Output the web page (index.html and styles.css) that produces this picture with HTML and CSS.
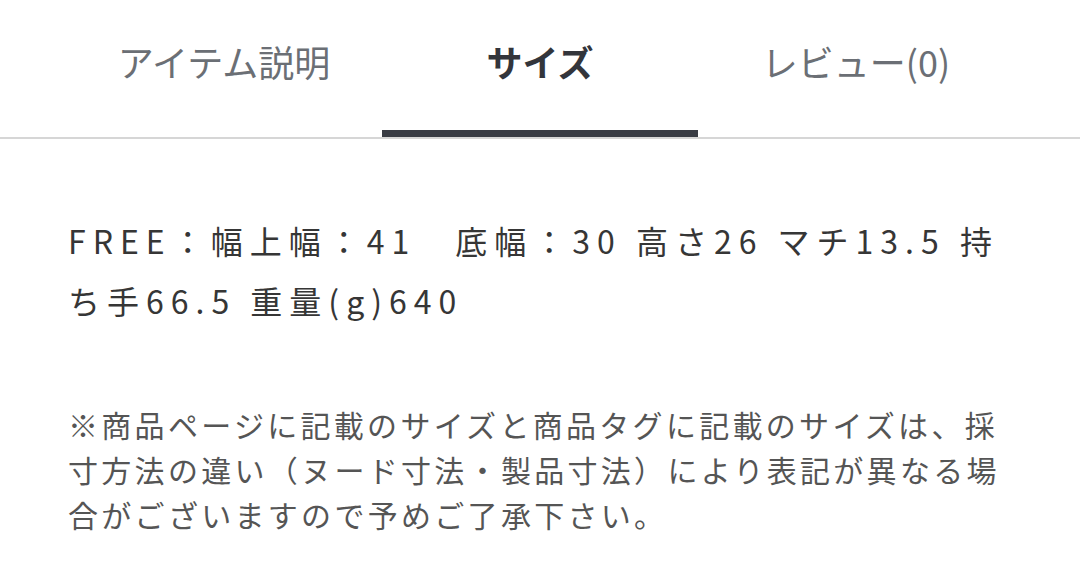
FILE: index.html
```html
<!DOCTYPE html>
<html lang="ja">
<head>
<meta charset="utf-8">
<link rel="stylesheet" href="styles.css">
</head>
<body>
<div class="page">
  <nav class="tabs">
    <div class="tab">アイテム説明</div>
    <div class="tab active">サイズ</div>
    <div class="tab">レビュー(0)</div>
  </nav>
  <section class="content">
    <p class="size">FREE：幅上幅：41　底幅：30 高さ26 マチ13.5 持ち手66.5 重量(g)640</p>
    <p class="note">※商品ページに記載のサイズと商品タグに記載のサイズは、採寸方法の違い（ヌード寸法・製品寸法）により表記が異なる場合がございますので予めご了承下さい。</p>
  </section>
</div>
</body>
</html>
```
FILE: styles.css
```css
html, body {
  margin: 0;
  padding: 0;
  background: #ffffff;
}
body {
  font-family: "Noto Sans CJK JP", "Noto Sans", sans-serif;
  width: 1080px;
  height: 568px;
  overflow: hidden;
}
.tabs {
  display: grid;
  grid-template-columns: repeat(3, 1fr);
  padding: 0 66px;
  border-bottom: 2px solid #d6d6d6;
}
.tab {
  height: 137px;
  display: flex;
  align-items: center;
  justify-content: center;
  font-size: 36px;
  color: #6b6f75;
  padding-bottom: 8px;
  box-sizing: border-box;
  border-bottom: 7px solid transparent;
}
.tab.active {
  color: #33353b;
  font-weight: 700;
  border-bottom-color: #393c44;
}
.content {
  padding: 0 68px;
}
.size {
  margin: 71px 0 0;
  font-size: 32px;
  line-height: 60px;
  letter-spacing: 7px;
  color: #363636;
}
.note {
  margin: 72px 0 0;
  font-size: 30px;
  line-height: 45px;
  letter-spacing: 3.3px;
  color: #555555;
}
```
